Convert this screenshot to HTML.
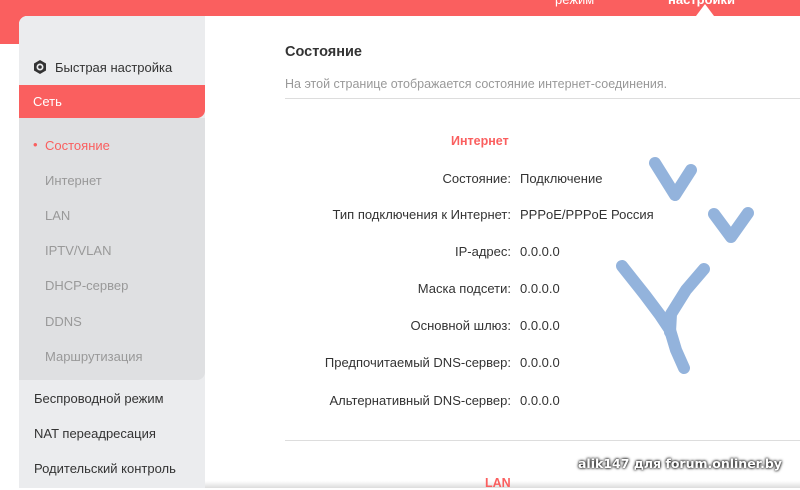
<!DOCTYPE html>
<html><head><meta charset="utf-8"><style>
*{margin:0;padding:0;box-sizing:border-box}
body{width:800px;height:488px;overflow:hidden;background:#fff;font-family:"Liberation Sans",sans-serif;position:relative;font-size:13px;color:#333}
.hdr{position:absolute;left:0;top:0;width:800px;height:44px;background:#fa5f5f}
.hdr span{position:absolute;top:-8px;color:#fff;font-size:13px}
.panel{position:absolute;left:19px;top:16px;width:781px;height:472px;background:#fff;border-top-left-radius:8px}
.caret{position:absolute;left:696px;top:4px;width:0;height:0;border-left:9px solid transparent;border-right:9px solid transparent;border-bottom:12px solid #fff}
.side{position:absolute;left:19px;top:16px;width:186px;height:472px;background:#ebecee;border-top-left-radius:8px;overflow:hidden}
.side .it{position:absolute;left:15px;font-size:13px;color:#333}
.net{position:absolute;left:0;top:69px;width:186px;height:33px;background:#fa5f5f;border-bottom-right-radius:8px;color:#fff;padding:9px 14px;font-size:13px}
.sub{position:absolute;left:0;top:102px;width:186px;height:262px;background:#dfe0e2;border-bottom-right-radius:8px}
.sub div{position:absolute;left:26px;color:#999;font-size:13px}
.main{position:absolute;left:285px}
.lbl{position:absolute;right:289px;text-align:right;font-size:13px;color:#333}
.val{position:absolute;left:520px;font-size:13px;color:#333}
</style></head><body>
<div class="hdr"><span style="left:555px">режим</span><span style="left:668px;font-weight:bold">настройки</span></div>
<div class="panel"></div>
<div class="caret"></div>
<div class="side">
<svg style="position:absolute;left:13px;top:43px" width="16" height="16" viewBox="0 0 16 16"><polygon points="8,1 14,4.5 14,11.5 8,15 2,11.5 2,4.5" fill="#333"/><circle cx="8" cy="8" r="3.5" fill="#ebecee"/><circle cx="8" cy="8" r="1.8" fill="#333"/></svg>
<div class="it" style="left:36px;top:44px">Быстрая настройка</div>
<div class="net">Сеть</div>
<div class="sub">
<div style="left:14px;top:19px;color:#fa5f5f">•</div>
<div style="top:20px;color:#fa5f5f">Состояние</div>
<div style="top:55px">Интернет</div>
<div style="top:90px">LAN</div>
<div style="top:125px">IPTV/VLAN</div>
<div style="top:160px">DHCP-сервер</div>
<div style="top:196px">DDNS</div>
<div style="top:231px">Маршрутизация</div>
</div>
<div class="it" style="top:375px">Беспроводной режим</div>
<div class="it" style="top:410px">NAT переадресация</div>
<div class="it" style="top:445px">Родительский контроль</div>
</div>
<div style="position:absolute;left:205px;top:481px;width:595px;height:7px;background:linear-gradient(#fff,#ddd)"></div>
<div class="main" style="top:44px;font-size:14.5px;font-weight:bold;color:#333">Состояние</div>
<div class="main" style="top:77px;font-size:12.5px;color:#999">На этой странице отображается состояние интернет-соединения.</div>
<div style="position:absolute;left:285px;top:98px;width:515px;height:1px;background:#ddd"></div>
<div style="position:absolute;left:451px;top:134px;color:#fa5f5f;font-weight:bold;font-size:12.5px">Интернет</div>
<div class="lbl" style="top:171px">Состояние:</div><div class="val" style="top:171px">Подключение</div>
<div class="lbl" style="top:207px">Тип подключения к Интернет:</div><div class="val" style="top:207px">PPPoE/PPPoE Россия</div>
<div class="lbl" style="top:244px">IP-адрес:</div><div class="val" style="top:244px">0.0.0.0</div>
<div class="lbl" style="top:281px">Маска подсети:</div><div class="val" style="top:281px">0.0.0.0</div>
<div class="lbl" style="top:318px">Основной шлюз:</div><div class="val" style="top:318px">0.0.0.0</div>
<div class="lbl" style="top:355px">Предпочитаемый DNS-сервер:</div><div class="val" style="top:355px">0.0.0.0</div>
<div class="lbl" style="top:393px">Альтернативный DNS-сервер:</div><div class="val" style="top:393px">0.0.0.0</div>
<div style="position:absolute;left:285px;top:440px;width:515px;height:1px;background:#ddd"></div>
<div style="position:absolute;left:485px;top:476px;color:#fa5f5f;font-weight:bold;font-size:12.5px">LAN</div>
<div style="position:absolute;left:578px;top:456px;color:#fff;font-weight:bold;font-size:12.5px;font-family:'DejaVu Sans',sans-serif;text-shadow:0 0 3px #000,0 0 2px #000">alik147 для forum.onliner.by</div>
<svg style="position:absolute;left:0;top:0" width="800" height="488"><g fill="none" stroke="#93b3dc" stroke-width="12" stroke-linecap="round" stroke-linejoin="round">
<path d="M655,163 L675,195 L691,170"/>
<path d="M714,214 L731,237 L748,213"/>
<path d="M622,266 L645,295 L660,315 L670,330 L676,350 L684,368"/>
<path d="M670,332 L671,314 L686,290 L704,269"/>
</g></svg>
</body></html>
